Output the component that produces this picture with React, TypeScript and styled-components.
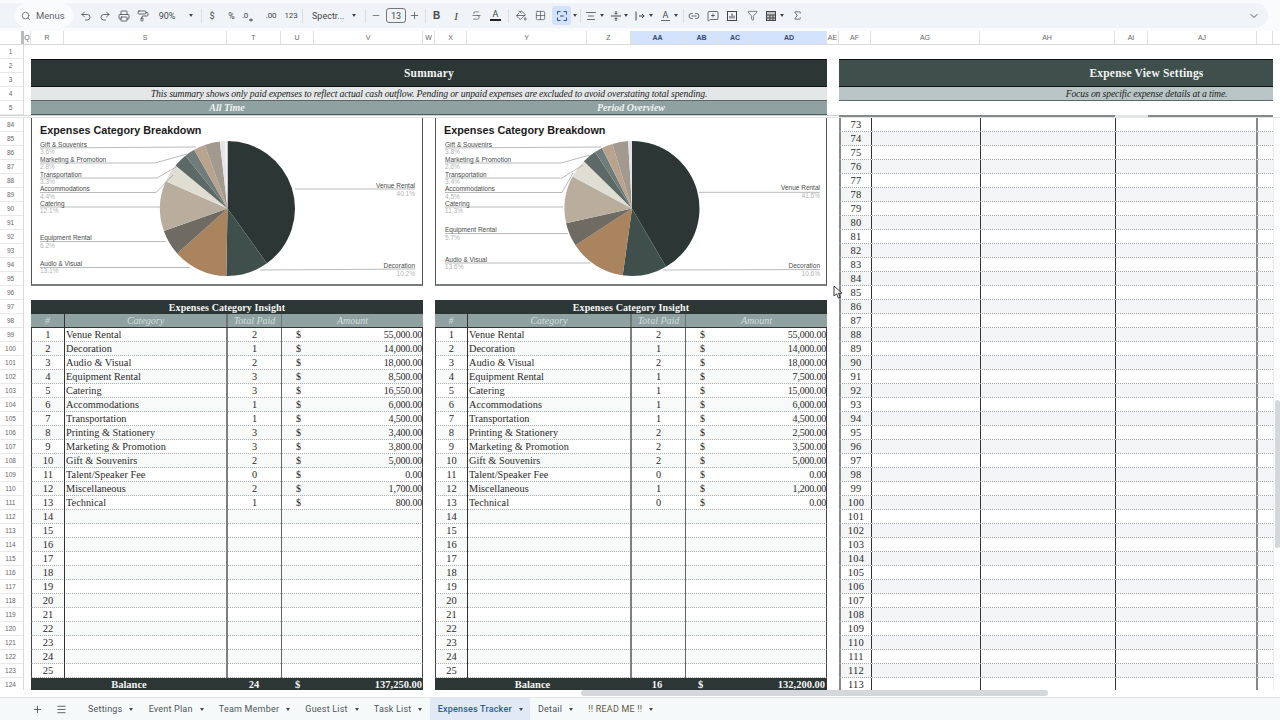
import React from "react";
import styled, { createGlobalStyle } from "styled-components";
import {
  Search, Undo2, Redo2, Printer, PaintRoller, Strikethrough, PaintBucket, Grid2x2,
  AlignCenter, Link2, MessageSquarePlus, Funnel, Sigma, ChevronDown, Plus, Minus, Menu,
} from "lucide-react";

const SERIF = `"Liberation Serif", "DejaVu Serif", serif`;
const SANS = `"Liberation Sans", Arial, sans-serif`;
const UI = `Roboto, "Liberation Sans", sans-serif`;

const Global = createGlobalStyle`
  html, body { margin: 0; padding: 0; background: #fff; }
  * { box-sizing: border-box; }
  #root { width: 1280px; height: 720px; }
`;

const Frame = styled.div`
  position: relative; width: 1280px; height: 720px; overflow: hidden;
  display: flex; flex-direction: column; background: #fff; font-family: ${SANS};
`;

/* ---------- toolbar ---------- */
const ToolbarWrap = styled.div`
  height: 31px; flex: none; padding: 3px 12px 3px 0; background: #f9fbfd;
`;
const Pill = styled.div`
  height: 25px; display: flex; align-items: center; background: #f0f4f9;
  border-radius: 0 13px 13px 0; color: #444746;
`;
const SearchPill = styled.div`
  width: 58px; height: 25px; margin-left: 15px; margin-right: 3px; background: #f9fbfd; border-radius: 13px;
  display: flex; align-items: center; gap: 5px; padding-left: 6px; flex: none;
  font: 9.5px ${UI}; color: #5f6368;
`;
const Tool = styled.div<{ $w: number; $on?: boolean; $left?: number }>`
  width: ${(p) => p.$w}px; height: 19px; flex: none; display: flex; align-items: center;
  justify-content: ${(p) => (p.$left ? "flex-start" : "center")};
  padding-left: ${(p) => p.$left || 0}px;
  font: 9px ${UI}; color: #444746; border-radius: 3px;
  background: ${(p) => (p.$on ? "#d3e3fd" : "transparent")};
`;
const BoldTool = styled(Tool)`font: bold 10px ${SANS};`;
const ItalicTool = styled(Tool)`font: italic 11px ${SERIF};`;
const ColorA = styled.span`
  font: 9px ${UI}; line-height: 9px; padding: 0 3px; border-bottom: 2px solid #222; color: #444746;
`;
const PlainA = styled.span`
  font: 9px ${UI}; line-height: 9px; padding: 0 2px; border-bottom: 1px solid #6a6d6c; color: #444746;
`;
const Sep = styled.div<{ $w: number }>`
  width: ${(p) => p.$w}px; flex: none; height: 14px; display: flex; justify-content: center;
  &::after { content: ""; width: 1px; background: #d9dde2; }
`;
const Caret = styled.span`
  width: 0; height: 0; border-left: 2.5px solid transparent; border-right: 2.5px solid transparent;
  border-top: 3px solid #444746; display: block; flex: none;
`;
const SizeBox = styled.div`
  width: 20px; height: 15px; margin: 0 3px 0 5px; flex: none; border: 1px solid #747775; border-radius: 3px;
  font: 9px ${UI}; color: #444746; display: flex; align-items: center; justify-content: center;
`;
const Spacer = styled.div`flex: 1;`;
const SmallNote = styled.span`font: 8px ${UI}; letter-spacing: -0.2px;`;

const ic = { size: 12, strokeWidth: 1.6 };

const Glyph = ({ children }: { children: React.ReactNode }) => (
  <svg width="12" height="12" viewBox="0 0 12 12" fill="none" stroke="#444746" strokeWidth="1">{children}</svg>
);

function Toolbar() {
  return (
    <ToolbarWrap>
      <Pill>
        <SearchPill><Search size={10} strokeWidth={2} />Menus</SearchPill>
        <Tool $w={19}><Undo2 {...ic} /></Tool>
        <Tool $w={19}><Redo2 {...ic} /></Tool>
        <Tool $w={19}><Printer {...ic} /></Tool>
        <Tool $w={20}><PaintRoller {...ic} /></Tool>
        <Tool $w={28}>90%</Tool>
        <Tool $w={20}><Caret /></Tool>
        <Sep $w={1} />
        <Tool $w={20}>$</Tool>
        <Tool $w={19}>%</Tool>
        <Tool $w={20}><SmallNote>.0</SmallNote><Glyph><path d="M1 10h4M3 8.5v3" /></Glyph></Tool>
        <Tool $w={20}><SmallNote>.00</SmallNote></Tool>
        <Tool $w={20}><SmallNote>123</SmallNote></Tool>
        <Sep $w={2} />
        <Tool $w={45} $left={9}>Spectr...</Tool>
        <Tool $w={12}><Caret /></Tool>
        <Sep $w={11} />
        <Tool $w={10}><Minus size={11} strokeWidth={1.6} /></Tool>
        <SizeBox>13</SizeBox>
        <Tool $w={11}><Plus size={11} strokeWidth={1.6} /></Tool>
        <Sep $w={11} />
        <BoldTool $w={11}>B</BoldTool>
        <Tool $w={4} />
        <ItalicTool $w={20}>I</ItalicTool>
        <Tool $w={20}><Strikethrough size={11} strokeWidth={1.4} /></Tool>
        <Tool $w={19}><ColorA>A</ColorA></Tool>
        <Sep $w={7} />
        <Tool $w={18}><PaintBucket size={11} strokeWidth={1.6} /></Tool>
        <Tool $w={20}><Grid2x2 size={11} strokeWidth={1.4} /></Tool>
        <Tool $w={2} />
        <Tool $w={19} $on>
          <Glyph><path d="M1.5 4.5V1.5h3M7.5 1.5h3v3M1.5 7.5v3h3M7.5 10.5h3v-3M4 6h4" stroke="#2f5597" /></Glyph>
        </Tool>
        <Tool $w={7}><Caret /></Tool>
        <Sep $w={4} />
        <Tool $w={18}><AlignCenter {...ic} /></Tool>
        <Tool $w={4}><Caret /></Tool>
        <Tool $w={3} />
        <Tool $w={17}><Glyph><path d="M1 6h10M6 1v3M4.5 2.8 6 4.3l1.5-1.5M6 11V8M4.5 9.2 6 7.7l1.5 1.5" /></Glyph></Tool>
        <Tool $w={4}><Caret /></Tool>
        <Tool $w={3} />
        <Tool $w={17}><Glyph><path d="M2 1.5v9M5 6h5M8 4l2.2 2L8 8" /></Glyph></Tool>
        <Tool $w={5}><Caret /></Tool>
        <Tool $w={5} />
        <Tool $w={15}><PlainA>A</PlainA></Tool>
        <Tool $w={6}><Caret /></Tool>
        <Sep $w={8} />
        <Tool $w={14}><Link2 {...ic} /></Tool>
        <Tool $w={3} />
        <Tool $w={18}><MessageSquarePlus {...ic} /></Tool>
        <Tool $w={20}><Glyph><rect x="1.5" y="1.5" width="9" height="9" /><path d="M4 8.5V6M6 8.5V3.5M8 8.5V5.5" /></Glyph></Tool>
        <Tool $w={20}><Funnel size={11} strokeWidth={1.5} /></Tool>
        <Tool $w={18}><Glyph><rect x="1.5" y="1.5" width="9" height="9" fill="#c4c7c5" /><path d="M1.5 5h9M5 5v5.5M8 5v5.5M1.5 8h9" /></Glyph></Tool>
        <Tool $w={4}><Caret /></Tool>
        <Tool $w={4} />
        <Tool $w={18}><Sigma size={11} strokeWidth={1.6} /></Tool>
        <Spacer />
        <Tool $w={19}><ChevronDown size={12} strokeWidth={1.8} /></Tool>
        <Tool $w={5} />
      </Pill>
    </ToolbarWrap>
  );
}

/* ---------- column headers ---------- */
const ColumnBar = styled.div`
  height: 14px; flex: none; display: flex; background: #fff; border-bottom: 1px solid #d9d9d9; padding-right: 7px;
`;
const ColCorner = styled.div`
  width: 24px; flex: none; border-right: 3px solid #b9bcbf;
`;
const ColCell = styled.div<{ $w: number; $sel?: boolean }>`
  width: ${(p) => p.$w}px; flex: none; display: flex; align-items: center; justify-content: center;
  font: ${(p) => (p.$sel ? "bold " : "")}7px ${SANS}; color: ${(p) => (p.$sel ? "#33486b" : "#666")};
  background: ${(p) => (p.$sel ? "#d3e3fd" : "#fff")}; border-right: 1px solid #dfe1e3;
`;
const columns: [string, number, boolean?][] = [
  ["Q", 7], ["R", 33], ["S", 163], ["T", 54], ["U", 33], ["V", 109], ["W", 12], ["X", 32], ["Y", 120], ["Z", 44],
  ["AA", 54, true], ["AB", 34, true], ["AC", 33, true], ["AD", 75, true], ["AE", 12],
  ["AF", 32], ["AG", 109], ["AH", 135], ["AI", 33], ["AJ", 109], ["", 16],
];

/* ---------- row gutter ---------- */
const Gutter = styled.div`width: 24px; flex: none; display: flex; flex-direction: column; border-right: 1px solid #d9d9d9;`;
const GutterCell = styled.div`
  height: 14px; flex: none; font: 6.5px ${SANS}; color: #666; display: flex; align-items: center; justify-content: center;
  border-bottom: 1px solid #e8e8e8; padding-right: 2px;
`;
const Gutters = ({ from, to }: { from: number; to: number }) => (
  <Gutter>
    {Array.from({ length: to - from + 1 }, (_, i) => <GutterCell key={i}>{from + i}</GutterCell>)}
  </Gutter>
);

/* ---------- frozen head ---------- */
const FrozenRow = styled.div`height: 70px; flex: none; display: flex;`;
const Offset = styled.div`width: 7px; flex: none;`;
const HeadBlock = styled.div<{ $w: number }>`
  width: ${(p) => p.$w}px; flex: none; padding-top: 14px; overflow: hidden;
  margin-right: 12px;
`;
const Banner = styled.div<{ $bg: string }>`
  height: 28px; background: ${(p) => p.$bg}; border-top: 1px solid #111; border-bottom: 1px solid #111;
  display: flex; align-items: center; justify-content: center;
  font: bold 11.5px ${SERIF}; color: #f2f4f3; letter-spacing: 0.2px;
`;
const NoteBar = styled.div<{ $bg: string }>`
  height: 14px; background: ${(p) => p.$bg}; border-bottom: 1px solid #5d6765;
  display: flex; align-items: center; justify-content: center;
  font: italic 9.7px ${SERIF}; color: #1e2423; white-space: nowrap; letter-spacing: -0.14px;
`;
const SubBar = styled.div`
  height: 14px; background: #8fa2a1; border-bottom: 1px solid #4f5b5a; display: grid; grid-template-columns: 392px 12px 392px;
  font: italic bold 10px ${SERIF}; color: #eef2f1; align-items: center; text-align: center;
`;
const WideInner = styled.div`width: 615px;`;

const FreezeBand = styled.div`
  height: 3px; flex: none; display: flex; background: #fff; border-bottom: 1px solid #e2e4e6;
`;
const FreezeLead = styled.div`width: 839px; flex: none; background: linear-gradient(#cdd3d3 0 1px, #fff 1px);`;
const FreezeLine = styled.div<{ $w: number; $off?: boolean }>`
  width: ${(p) => p.$w}px; flex: none; height: 2px; background: ${(p) => (p.$off ? "#e4e6e7" : "#85898a")};
`;

/* ---------- body ---------- */
const ScrollRow = styled.div`height: 572px; flex: none; display: flex; align-items: flex-start; overflow: hidden;`;
const Panel = styled.div`
  width: 392px; flex: none; margin-right: 12px; display: flex; flex-direction: column;
  & > * { flex: none; }
`;
const ChartBox = styled.div`
  height: 168px; margin-bottom: 14px; background: #fff;
  border-left: 1px solid #555; border-right: 1px solid #555; border-bottom: 2px solid #7a7d7e;
`;
const ChartTitle = styled.div`
  height: 21px; padding: 6px 0 0 8px; font: bold 10.8px ${SANS}; color: #1a1a1a; line-height: 12px; white-space: nowrap;
`;
const ChartSvg = styled.svg`display: block; overflow: visible;`;
const ChartName = styled.text`font: 6.5px ${SANS}; fill: #4a4a4a;`;
const ChartPct = styled.text`font: 6.5px ${SANS}; fill: #b2b2b2;`;

const TableTitle = styled.div`
  height: 14px; background: #2b3635; color: #f4f5f4; font: bold 10px ${SERIF}; letter-spacing: 0.1px;
  display: flex; align-items: center; justify-content: center;
`;
const TableHead = styled.div<{ $n: number }>`
  display: grid; grid-template-columns: ${(p) => p.$n + 1}px 1fr 54px 141px;
  height: 14px; background: #8fa2a1; border-bottom: 1px solid #333;
`;
const HeadCell = styled.div<{ $edge?: string }>`
  font: italic 10px ${SERIF}; color: #d3dddc; display: flex; align-items: center; justify-content: center;
  border-right: ${(p) => p.$edge || "none"};
`;
const DataRow = styled.div<{ $n: number; $odd: boolean }>`
  display: grid; grid-template-columns: ${(p) => p.$n}px 1fr 54px 140px;
  height: 14px; background: ${(p) => (p.$odd ? "#fff" : "#f8f9f9")};
  border-left: 1px solid #444; border-right: 1px solid #444; border-bottom: 1px dotted #a8abac;
  font: 10.3px ${SERIF}; color: #2a2a2a; letter-spacing: 0.02px; line-height: 14px;
`;
const NumCell = styled.div`text-align: center; border-right: 1px solid #333; font-size: 10.5px;`;
const NameCell = styled.div`padding-left: 1px; border-right: 2px solid #7d8081; white-space: nowrap;`;
const PaidCell = styled.div`text-align: center; border-right: 1.5px solid #666;`;
const MoneyCell = styled.div`
  display: flex; justify-content: space-between; padding: 0 0 0 14px; font-size: 10px; letter-spacing: -0.2px;
`;
const BalanceRow = styled.div<{ $n: number }>`
  display: grid; grid-template-columns: ${(p) => p.$n + 163}px 54px 142px; height: 14px; background: #2b3635; color: #f4f5f4;
  font: bold 10.5px ${SERIF}; line-height: 13px;
`;
const BalanceLabel = styled.div`text-align: center;`;
const BalanceCount = styled.div`text-align: center;`;
const BalanceMoney = styled.div`display: flex; justify-content: space-between; padding: 0 1px 0 14px;`;

const SettingsBlock = styled.div`width: 434px; flex: none;`;
const SettingsRow = styled.div<{ $odd: boolean }>`
  display: grid; grid-template-columns: 33px 109px 135px 142px 15px; height: 14px;
  background: ${(p) => (p.$odd ? "#fff" : "#f3f5f6")}; border-bottom: 1px dotted #a0a3a4;
`;
const SetNum = styled.div`
  border-left: 2px solid #85898a; border-right: 1px solid #333; text-align: center;
  font: 10.5px ${SERIF}; color: #2a2a2a; line-height: 13px; letter-spacing: 0.25px;
`;
const SetCell = styled.div<{ $edge?: string }>`
  border-right: ${(p) => p.$edge || "1px solid #333"};
`;
const SetTail = styled.div``;

const VTrack = styled.div`width: 7px; height: 572px; flex: none; background: #fdfdfd; border-left: 1px solid #eceeef; padding: 282px 0 0 1px; display: flex; flex-direction: column;`;
const VThumb = styled.div`width: 5px; height: 148px; flex: none; border-radius: 3px; background: #d5d8da;`;

const HStrip = styled.div`
  height: 8px; flex: none; padding-left: 581px; background: #fff; border-bottom: 1px solid #e3e6e8;
`;
const HThumb = styled.div`width: 467px; height: 6px; background: #d5d8da; border-radius: 3px;`;

/* ---------- tabs ---------- */
const TabBar = styled.div`
  flex: 1; display: flex; align-items: stretch; background: #f6f9fa; padding-left: 28px;
`;
const TabIcon = styled.div<{ $w: number }>`
  width: ${(p) => p.$w}px; flex: none; display: flex; align-items: center; justify-content: center; color: #444746;
`;
const Tab = styled.div<{ $active?: boolean; $tint?: boolean }>`
  display: flex; align-items: center; gap: 7px; padding: 0 7.2px 0 8px;
  font: 9px ${UI}; letter-spacing: 0.2px; white-space: nowrap;
  color: ${(p) => (p.$active ? "#2d5c9c" : p.$tint ? "#5e5a3c" : "#50555a")};
  background: ${(p) => (p.$active ? "#e1e9f7" : "transparent")};
  font-weight: ${(p) => (p.$active ? 500 : 400)};
`;

const Cursor = styled.svg`position: absolute; left: 833px; top: 285px; pointer-events: none;`;

/* ---------- data ---------- */
const names = [
  "Venue Rental", "Decoration", "Audio & Visual", "Equipment Rental", "Catering", "Accommodations",
  "Transportation", "Printing & Stationery", "Marketing & Promotion", "Gift & Souvenirs",
  "Talent/Speaker Fee", "Miscellaneous", "Technical",
];
const sliceColors = [
  "#2b3635", "#3f4f4c", "#a9845f", "#6f6a62", "#b9ad9e", "#e0ddd3",
  "#5c6967", "#6f7c7a", "#b8a48e", "#a39a8f", "#ffffff", "#e4e5e8", "#f2f2f4",
];
const leftData = {
  n: 33,
  paid: [2, 1, 2, 3, 3, 1, 1, 3, 3, 2, 0, 2, 1],
  amount: [55000, 14000, 18000, 8500, 16550, 6000, 4500, 3400, 3800, 5000, 0, 1700, 800],
  count: 24, total: "137,250.00",
};
const rightData = {
  n: 32,
  paid: [2, 1, 2, 1, 1, 1, 1, 2, 2, 2, 0, 1, 0],
  amount: [55000, 14000, 18000, 7500, 15000, 6000, 4500, 2500, 3500, 5000, 0, 1200, 0],
  count: 16, total: "132,200.00",
};

type Lbl = { name: string; pct: string; y: number; pts: string };
const leftChart = {
  x0: 32, cx: 227.5,
  labels: [
    { name: "Gift & Souvenirs", pct: "3.6%", y: 146.5, pts: "40,148 196,147" },
    { name: "Marketing & Promotion", pct: "2.8%", y: 161.5, pts: "40,163 155,163 187,154" },
    { name: "Transportation", pct: "3.3%", y: 176.5, pts: "40,178 157,178 176,167" },
    { name: "Accommodations", pct: "4.4%", y: 191, pts: "40,192.5 156,192.5 173,175" },
    { name: "Catering", pct: "12.1%", y: 205.5, pts: "40,207 160,207" },
    { name: "Equipment Rental", pct: "6.2%", y: 240, pts: "40,241.5 166,241.5" },
    { name: "Audio & Visual", pct: "13.1%", y: 265.5, pts: "40,267.5 190,267.5" },
  ] as Lbl[],
  right: [
    { name: "Venue Rental", pct: "40.1%", y: 187.5, pts: "295,189 415,189" },
    { name: "Decoration", pct: "10.2%", y: 267.5, pts: "260,270 415,269" },
  ] as Lbl[],
  textR: 415, textL: 40,
};
const rightChart = {
  x0: 436, cx: 632,
  labels: [
    { name: "Gift & Souvenirs", pct: "3.8%", y: 146.5, pts: "445,148 601,147" },
    { name: "Marketing & Promotion", pct: "2.6%", y: 161.5, pts: "445,163 561,163 590,155" },
    { name: "Transportation", pct: "3.4%", y: 176.5, pts: "445,178 562,178 583,165" },
    { name: "Accommodations", pct: "4.5%", y: 191, pts: "445,192.5 562,192.5 573,173" },
    { name: "Catering", pct: "11.3%", y: 205.5, pts: "445,207 563,207" },
    { name: "Equipment Rental", pct: "5.7%", y: 232, pts: "445,233.5 568,233.5" },
    { name: "Audio & Visual", pct: "13.6%", y: 261.5, pts: "445,263 590,263" },
  ] as Lbl[],
  right: [
    { name: "Venue Rental", pct: "41.6%", y: 190, pts: "699,192.3 820,192.3" },
    { name: "Decoration", pct: "10.6%", y: 267.5, pts: "663,270 820,269.5" },
  ] as Lbl[],
  textR: 820, textL: 445,
};

function money(v: number) {
  return v.toLocaleString("en-US", { minimumFractionDigits: 2, maximumFractionDigits: 2 });
}

function Pie({ values, cx, cy, r }: { values: number[]; cx: number; cy: number; r: number }) {
  const total = values.reduce((a, b) => a + b, 0);
  let acc = 0;
  return (
    <g>
      {values.map((v, i) => {
        if (!v) return null;
        const a0 = (acc / total) * Math.PI * 2;
        acc += v;
        const a1 = (acc / total) * Math.PI * 2;
        const p = (a: number) => `${cx + r * Math.sin(a)} ${cy - r * Math.cos(a)}`;
        return (
          <path
            key={i}
            d={`M${cx} ${cy}L${p(a0)}A${r} ${r} 0 ${a1 - a0 > Math.PI ? 1 : 0} 1 ${p(a1)}Z`}
            fill={sliceColors[i]}
          />
        );
      })}
    </g>
  );
}

function Chart({ cfg, values }: { cfg: typeof leftChart; values: number[] }) {
  return (
    <ChartBox>
      <ChartTitle>Expenses Category Breakdown</ChartTitle>
      <ChartSvg width="390" height="145" viewBox={`${cfg.x0} 139 390 145`}>
        <Pie values={values} cx={cfg.cx} cy={208.5} r={67.5} />
        {[...cfg.labels, ...cfg.right].map((l) => (
          <polyline key={l.name} points={l.pts} fill="none" stroke="#9a9d9d" strokeWidth="0.7" />
        ))}
        {cfg.labels.map((l) => (
          <g key={l.name}>
            <ChartName x={cfg.textL} y={l.y}>{l.name}</ChartName>
            <ChartPct x={cfg.textL} y={l.y + 7.5}>{l.pct}</ChartPct>
          </g>
        ))}
        {cfg.right.map((l) => (
          <g key={l.name}>
            <ChartName x={cfg.textR} y={l.y} textAnchor="end">{l.name}</ChartName>
            <ChartPct x={cfg.textR} y={l.y + 8} textAnchor="end">{l.pct}</ChartPct>
          </g>
        ))}
      </ChartSvg>
    </ChartBox>
  );
}

function Insight({ data }: { data: typeof leftData }) {
  const n = data.n;
  return (
    <>
      <TableTitle>Expenses Category Insight</TableTitle>
      <TableHead $n={n}>
        <HeadCell $edge="1px solid #333">#</HeadCell>
        <HeadCell $edge="2px solid #6f7475">Category</HeadCell>
        <HeadCell $edge="1.5px solid #6f7475">Total Paid</HeadCell>
        <HeadCell>Amount</HeadCell>
      </TableHead>
      {Array.from({ length: 25 }, (_, i) => {
        const has = i < names.length;
        return (
          <DataRow key={i} $n={n} $odd={i % 2 === 0}>
            <NumCell>{i + 1}</NumCell>
            <NameCell>{has ? names[i] : ""}</NameCell>
            <PaidCell>{has ? data.paid[i] : ""}</PaidCell>
            <MoneyCell>
              {has && <span>$</span>}
              {has && <span>{money(data.amount[i])}</span>}
            </MoneyCell>
          </DataRow>
        );
      })}
      <BalanceRow $n={n}>
        <BalanceLabel>Balance</BalanceLabel>
        <BalanceCount>{data.count}</BalanceCount>
        <BalanceMoney><span>$</span><span>{data.total}</span></BalanceMoney>
      </BalanceRow>
    </>
  );
}

const tabs = ["Settings", "Event Plan", "Team Member", "Guest List", "Task List", "Expenses Tracker", "Detail", "!! READ ME !!"];

export default function App() {
  return (
    <Frame>
      <Global />
      <Toolbar />
      <ColumnBar>
        <ColCorner />
        {columns.map(([l, w, s], i) => <ColCell key={i} $w={w} $sel={s}>{l}</ColCell>)}
      </ColumnBar>

      <FrozenRow>
        <Gutters from={1} to={5} />
        <Offset />
        <HeadBlock $w={796}>
          <Banner $bg="#2b3635">Summary</Banner>
          <NoteBar $bg="#e3e7e8">
            This summary shows only paid expenses to reflect actual cash outflow. Pending or unpaid expenses are excluded to avoid overstating total spending.
          </NoteBar>
          <SubBar>
            <span>All Time</span><span />
            <span>Period Overview</span>
          </SubBar>
        </HeadBlock>
        <HeadBlock $w={434}>
          <WideInner>
            <Banner $bg="#3f4f4c">Expense View Settings</Banner>
            <NoteBar $bg="#b9c6c5">Focus on specific expense details at a time.</NoteBar>
          </WideInner>
        </HeadBlock>
      </FrozenRow>

      <FreezeBand>
        <FreezeLead />
        <FreezeLine $w={276} />
        <FreezeLine $w={33} $off />
        <FreezeLine $w={125} />
      </FreezeBand>

      <ScrollRow>
        <Gutters from={84} to={124} />
        <Offset />
        <Panel>
          <Chart cfg={leftChart} values={leftData.amount} />
          <Insight data={leftData} />
        </Panel>
        <Panel>
          <Chart cfg={rightChart} values={rightData.amount} />
          <Insight data={rightData} />
        </Panel>
        <SettingsBlock>
          {Array.from({ length: 41 }, (_, i) => (
            <SettingsRow key={i} $odd={i % 2 === 0}>
              <SetNum>{73 + i}</SetNum>
              <SetCell />
              <SetCell />
              <SetCell $edge="2px solid #85898a" />
              <SetTail />
            </SettingsRow>
          ))}
        </SettingsBlock>
        <VTrack><VThumb /></VTrack>
      </ScrollRow>

      <HStrip><HThumb /></HStrip>

      <TabBar>
        <TabIcon $w={19}><Plus size={11} strokeWidth={1.8} /></TabIcon>
        <TabIcon $w={29}><Menu size={11} strokeWidth={1.8} /></TabIcon>
        <TabIcon $w={4} />
        {tabs.map((t) => (
          <Tab key={t} $active={t === "Expenses Tracker"} $tint={t.startsWith("!!")}>
            {t}<Caret />
          </Tab>
        ))}
      </TabBar>

      <Cursor width="10" height="14" viewBox="0 0 10 14">
        <path d="M1 1v10l2.6-2.2L5.4 13l1.8-.8L5.4 8.2H9z" fill="#fff" stroke="#222" strokeWidth="0.9" />
      </Cursor>
    </Frame>
  );
}
